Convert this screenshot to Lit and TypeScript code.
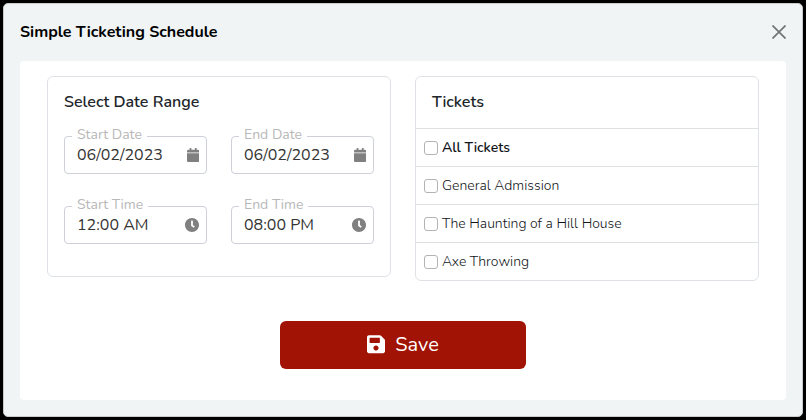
import { LitElement, html, css, svg } from "lit";
import { customElement, property } from "lit/decorators.js";

const ICONS = {
  calendar: svg`<svg viewBox="0 0 448 512" aria-hidden="true"><path d="M12 192h424c6.600 0 12 5.400 12 12v260c0 26.500-21.500 48-48 48H48c-26.500 0-48-21.500-48-48V204c0-6.600 5.400-12 12-12zm436-44v-36c0-26.500-21.500-48-48-48h-48V12c0-6.600-5.400-12-12-12h-40c-6.600 0-12 5.400-12 12v52H160V12c0-6.600-5.400-12-12-12h-40c-6.600 0-12 5.400-12 12v52H48C21.500 64 0 85.500 0 112v36c0 6.600 5.400 12 12 12h424c6.600 0 12-5.400 12-12z"/></svg>`,
  clock: svg`<svg viewBox="8 8 496 496" aria-hidden="true"><path d="M256,8C119,8,8,119,8,256S119,504,256,504,504,393,504,256,393,8,256,8Zm92.490,313h0l-20,25a16,16,0,0,1-22.490,2.500h0l-67-49.720a40,40,0,0,1-15-31.230V112a16,16,0,0,1,16-16h32a16,16,0,0,1,16,16V256l58,42.500A16,16,0,0,1,348.490,321Z"/></svg>`,
};

@customElement("schedule-field")
class ScheduleField extends LitElement {
  @property() label = "";
  @property() value = "";
  @property() icon: keyof typeof ICONS = "calendar";

  static styles = css`
    :host {
      display: block;
      min-width: 0;
      position: relative;
    }
    .box {
      display: flex;
      align-items: center;
      height: 38px;
      box-sizing: border-box;
      padding: 0 7px 0 12px;
      border: 1px solid #ced0da;
      border-radius: 4px;
      background: #fff;
    }
    .input {
      flex: 1;
      min-width: 0;
      padding: 0;
      border: 0;
      outline: 0;
      background: none;
      font: inherit;
      font-size: 16px;
      line-height: 24px;
      color: #333;
    }
    .label {
      position: absolute;
      top: -11px;
      left: 8px;
      padding: 0 5px;
      background: #fff;
      color: #b8b8b8;
      font-size: 14px;
      line-height: 20px;
    }
    .icon {
      display: flex;
      height: 14px;
      color: #808080;
    }
    .icon svg {
      height: 14px;
      fill: currentColor;
    }
  `;

  render() {
    return html`
      <div class="box">
        <input class="input" id="control" type="text" .value=${this.value} />
        <span class="icon">${ICONS[this.icon]}</span>
      </div>
      <label class="label" for="control">${this.label}</label>
    `;
  }
}

@customElement("app-root")
class AppRoot extends LitElement {
  private tickets = ["General Admission", "The Haunting of a Hill House", "Axe Throwing"];

  static styles = css`
    :host {
      display: block;
      box-sizing: border-box;
      min-height: 100vh;
      padding: 3px;
      background: #000;
      color: #212529;
      font-family: Nunito, "Open Sans", sans-serif;
    }
    .dialog {
      padding: 0 16px 16px;
      border: 1px solid #c8cccd;
      border-radius: 5px;
      background: #f0f4f5;
    }
    .header {
      display: flex;
      align-items: center;
      justify-content: space-between;
      box-sizing: border-box;
      height: 57px;
      padding-bottom: 2px;
    }
    .title {
      margin: 0;
      color: #000;
      font-size: 16px;
      font-weight: 700;
      line-height: 24px;
    }
    .close {
      display: flex;
      padding: 0;
      border: 0;
      background: none;
      color: #707476;
      cursor: pointer;
    }
    .close svg {
      width: 14px;
      height: 14px;
      stroke: currentColor;
      stroke-width: 1.700;
    }
    .content {
      padding: 15px 27px 31px;
      border-radius: 4px;
      background: #fff;
    }
    .cards {
      display: grid;
      grid-template-columns: 1fr 1fr;
      align-items: start;
      gap: 24px;
    }
    .card {
      border: 1px solid #dee2e6;
      border-radius: 6px;
    }
    .range {
      padding: 13px 16px 32px;
    }
    .heading {
      margin: 0;
      font-size: 16px;
      font-weight: 600;
      line-height: 24px;
    }
    .fields {
      display: grid;
      grid-template-columns: 1fr 1fr;
      gap: 32px 24px;
      margin-top: 22px;
    }
    .tickets .heading {
      padding: 13px 16px 14px;
    }
    .list {
      margin: 0;
      padding: 0;
      list-style: none;
    }
    .row {
      border-top: 1px solid #dee0e2;
    }
    .choice {
      display: flex;
      align-items: center;
      gap: 4px;
      height: 37px;
      padding: 0 8px;
      color: #111518;
      font-size: 14px;
      font-weight: 300;
      line-height: 20px;
    }
    .all {
      font-weight: 600;
    }
    .check {
      appearance: none;
      width: 14px;
      height: 14px;
      margin: 0;
      border: 1px solid #b3b3b3;
      border-radius: 3px;
      background: #fff;
    }
    .check:checked {
      background: #a01305;
    }
    .actions {
      display: flex;
      justify-content: center;
      margin-top: 40px;
    }
    .save {
      display: flex;
      align-items: center;
      justify-content: center;
      gap: 10px;
      width: 246px;
      height: 48px;
      padding: 0;
      border: 0;
      border-radius: 6px;
      background: #a01305;
      color: #fff;
      font: inherit;
      font-size: 20px;
      line-height: 28px;
      cursor: pointer;
    }
    .save svg {
      width: 18px;
      height: 20px;
      fill: currentColor;
    }
  `;

  private choice(name: string, all = false) {
    return html`<li class="row">
      <label class="choice ${all ? "all" : ""}">
        <input class="check" type="checkbox" />${name}
      </label>
    </li>`;
  }

  render() {
    return html`
      <section class="dialog" role="dialog" aria-labelledby="title">
        <header class="header">
          <h1 class="title" id="title">Simple Ticketing Schedule</h1>
          <button class="close" type="button" aria-label="Close">
            <svg viewBox="0 0 14 14"><path d="M.5 .5L13.500 13.500M13.500 .5L.5 13.500" /></svg>
          </button>
        </header>
        <form class="content" @submit=${(e: Event) => e.preventDefault()}>
          <div class="cards">
            <section class="card range">
              <h2 class="heading">Select Date Range</h2>
              <div class="fields">
                <schedule-field label="Start Date" value="06/02/2023" icon="calendar"></schedule-field>
                <schedule-field label="End Date" value="06/02/2023" icon="calendar"></schedule-field>
                <schedule-field label="Start Time" value="12:00 AM" icon="clock"></schedule-field>
                <schedule-field label="End Time" value="08:00 PM" icon="clock"></schedule-field>
              </div>
            </section>
            <section class="card tickets">
              <h2 class="heading">Tickets</h2>
              <ul class="list">
                ${this.choice("All Tickets", true)}
                ${this.tickets.map((name) => this.choice(name))}
              </ul>
            </section>
          </div>
          <div class="actions">
            <button class="save" type="submit">
              <svg viewBox="0 52 448 448" aria-hidden="true"><path d="M433.941 129.941l-83.882-83.882A48 48 0 0 0 316.118 32H48C21.490 32 0 53.490 0 80v352c0 26.510 21.490 48 48 48h352c26.510 0 48-21.490 48-48V163.882a48 48 0 0 0-14.059-33.941zM224 416c-35.346 0-64-28.654-64-64 0-35.346 28.654-64 64-64s64 28.654 64 64c0 35.346-28.654 64-64 64zm96-304.520V212c0 6.627-5.373 12-12 12H76c-6.627 0-12-5.373-12-12V108c0-6.627 5.373-12 12-12h228.520c3.183 0 6.235 1.264 8.485 3.515l3.480 3.480A11.996 11.996 0 0 1 320 111.480z"/></svg>
              Save
            </button>
          </div>
        </form>
      </section>
    `;
  }
}
